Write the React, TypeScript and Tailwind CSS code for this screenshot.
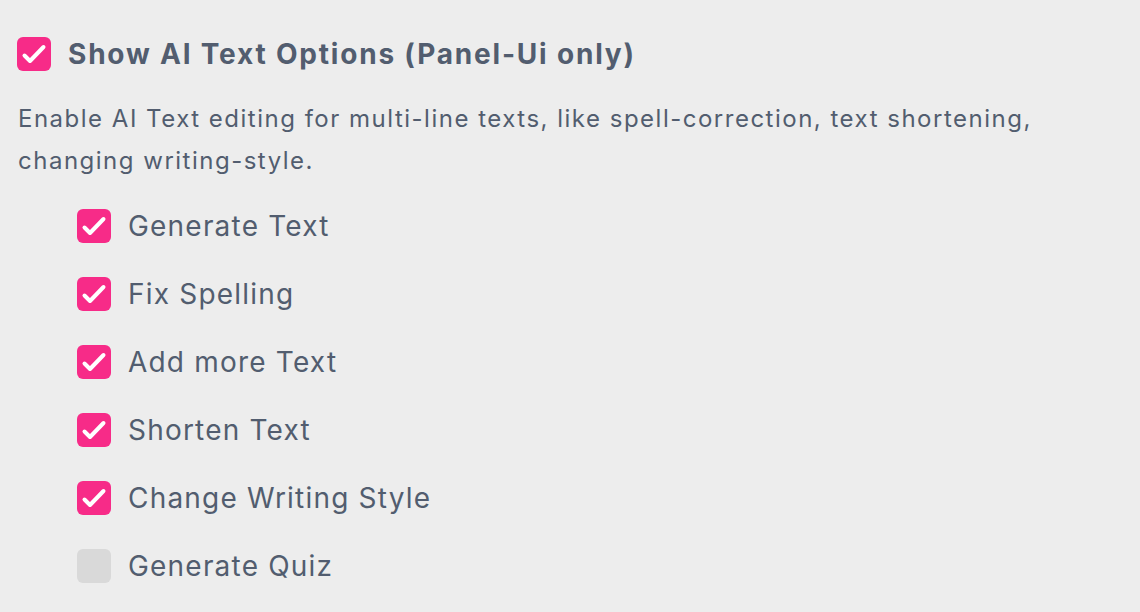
import React, { useState } from "react";

const options = [
  { label: "Generate Text", checked: true },
  { label: "Fix Spelling", checked: true },
  { label: "Add more Text", checked: true },
  { label: "Shorten Text", checked: true },
  { label: "Change Writing Style", checked: true },
  { label: "Generate Quiz", checked: false },
];

const Box: React.FC<{ checked: boolean; onClick: () => void }> = ({ checked, onClick }) => (
  <button
    type="button"
    onClick={onClick}
    className={`w-[34px] h-[34px] rounded-[6px] flex items-center justify-center shrink-0 ${
      checked ? "bg-[#f72b88]" : "bg-[#d9d9d9]"
    }`}
  >
    {checked && (
      <svg width="34" height="34" viewBox="0 0 34 34" fill="none">
        <path d="M7.5 18.5l5.5 5.5L26.5 10" stroke="white" strokeWidth={4} strokeLinecap="round" strokeLinejoin="round" />
      </svg>
    )}
  </button>
);

export default function App() {
  const [main, setMain] = useState(true);
  const [items, setItems] = useState(options.map((o) => o.checked));

  return (
    <div className="min-h-[612px] w-full bg-[#ededed] text-[#525d6f] font-['Inter',sans-serif] pl-[17px] pt-[37px]">
      <div className="flex items-center gap-[17px]">
        <Box checked={main} onClick={() => setMain(!main)} />
        <span className="text-[28px] font-bold leading-[34px] tracking-[1.8px]">
          Show AI Text Options (Panel-Ui only)
        </span>
      </div>
      <p className="mt-[27px] pl-[1px] w-[1040px] text-[24px] leading-[42px] tracking-[1.5px]">
        Enable AI Text editing for multi-line texts, like spell-correction, text shortening, changing writing-style.
      </p>
      <div className="mt-[27px] pl-[60px] flex flex-col gap-[34px]">
        {options.map((o, i) => (
          <div key={o.label} className="flex items-center gap-[17px] h-[34px]">
            <Box
              checked={items[i]}
              onClick={() => setItems(items.map((v, j) => (j === i ? !v : v)))}
            />
            <span className="text-[28px] leading-[34px] tracking-[1.2px]">{o.label}</span>
          </div>
        ))}
      </div>
    </div>
  );
}
